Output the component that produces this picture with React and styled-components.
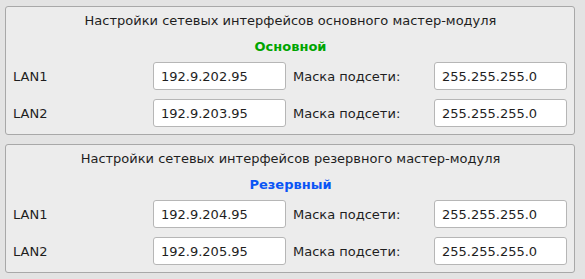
import React from 'react';
import styled, { createGlobalStyle } from 'styled-components';

const GlobalStyle = createGlobalStyle`
  html, body {
    margin: 0;
    padding: 0;
    background: #e3e3e3;
    font-family: "DejaVu Sans", "Liberation Sans", sans-serif;
    font-size: 13px;
    color: #1e1e1e;
  }
`;

const Page = styled.div`
  width: 585px;
  height: 279px;
  box-sizing: border-box;
  padding: 6px 10px 0 5px;
  display: flex;
  flex-direction: column;
  gap: 9px;
`;

const GroupBox = styled.section`
  box-sizing: border-box;
  border: 1px solid #a8a8a8;
  border-radius: 3px;
  background: #ececec;
  padding: 6px 6px 7px 7px;
  display: flex;
  flex-direction: column;
`;

const Title = styled.div`
  height: 16px;
  line-height: 16px;
  text-align: center;
`;

const Mode = styled.div`
  height: 16px;
  line-height: 16px;
  margin: 10px 0 7px;
  text-align: center;
  font-weight: bold;
  color: ${(p) => p.$color};
`;

const Grid = styled.div`
  display: grid;
  grid-template-columns: 140px 133px 148px 133px;
  grid-auto-rows: 28px;
  row-gap: 9px;
  align-items: center;
`;

const Label = styled.div`
  padding-left: ${(p) => (p.$indent ? '7px' : '0')};
`;

const Field = styled.input`
  box-sizing: border-box;
  width: 133px;
  height: 28px;
  margin: 0;
  padding: 0 7px;
  border: 1px solid #b6b6b6;
  border-radius: 3px;
  background: #ffffff;
  font-family: "DejaVu Sans", "Liberation Sans", sans-serif;
  font-size: 13px;
  color: #1e1e1e;
  outline: none;
`;

const groups = [
  {
    title: 'Настройки сетевых интерфейсов основного мастер-модуля',
    mode: 'Основной',
    color: '#00a500',
    rows: [
      { lan: 'LAN1', ip: '192.9.202.95' },
      { lan: 'LAN2', ip: '192.9.203.95' },
    ],
  },
  {
    title: 'Настройки сетевых интерфейсов резервного мастер-модуля',
    mode: 'Резервный',
    color: '#0a55f5',
    rows: [
      { lan: 'LAN1', ip: '192.9.204.95' },
      { lan: 'LAN2', ip: '192.9.205.95' },
    ],
  },
];

const App = () => {
  return (
    <>
      <GlobalStyle />
      <Page>
        {groups.map((g) => (
          <GroupBox key={g.mode}>
            <Title>{g.title}</Title>
            <Mode $color={g.color}>{g.mode}</Mode>
            <Grid>
              {g.rows.map((r) => (
                <React.Fragment key={r.lan}>
                  <Label>{r.lan}</Label>
                  <Field defaultValue={r.ip} />
                  <Label $indent>Маска подсети:</Label>
                  <Field defaultValue="255.255.255.0" />
                </React.Fragment>
              ))}
            </Grid>
          </GroupBox>
        ))}
      </Page>
    </>
  );
};

export default App;
